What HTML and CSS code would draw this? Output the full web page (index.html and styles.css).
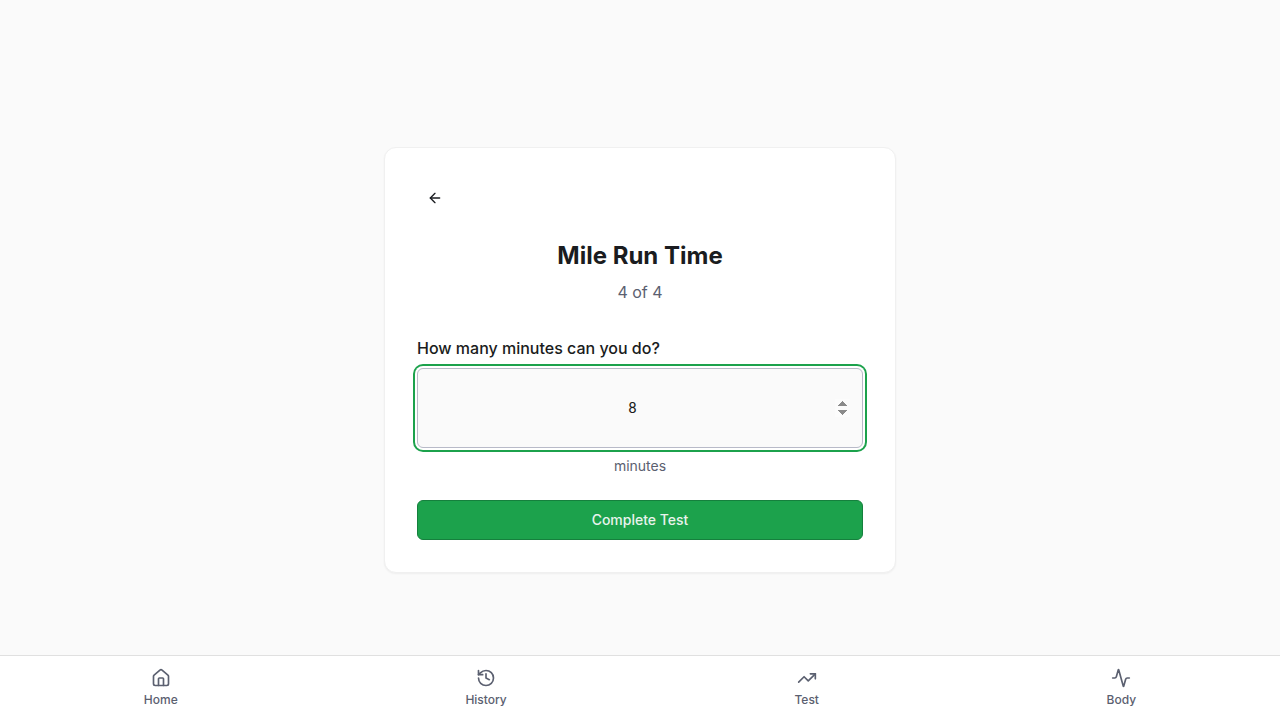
FILE: index.html
```html
<!DOCTYPE html>
<html lang="en">
<head>
<meta charset="utf-8">
<meta name="viewport" content="width=device-width, initial-scale=1">
<title>Mile Run Time</title>
<link rel="stylesheet" href="styles.css">
</head>
<body>
<main class="page">
  <form class="card">
    <button type="button" class="back" aria-label="Back">
      <svg class="icon-sm" viewBox="0 0 24 24"><path d="m12 19-7-7 7-7"/><path d="M19 12H5"/></svg>
    </button>
    <header class="heading">
      <h1 class="title">Mile Run Time</h1>
      <p class="step">4 of 4</p>
    </header>
    <div class="field">
      <label class="label" for="minutes">How many minutes can you do?</label>
      <input class="input" id="minutes" type="number" value="8" autofocus>
      <p class="unit">minutes</p>
    </div>
    <button type="button" class="submit">Complete Test</button>
  </form>
</main>
<nav class="tabs">
  <a class="tab" href="#home">
    <svg class="icon" viewBox="0 0 24 24"><path d="M15 21v-8a1 1 0 0 0-1-1h-4a1 1 0 0 0-1 1v8"/><path d="M3 10a2 2 0 0 1 .709-1.528l7-5.999a2 2 0 0 1 2.582 0l7 5.999A2 2 0 0 1 21 10v9a2 2 0 0 1-2 2H5a2 2 0 0 1-2-2z"/></svg>
    <span>Home</span>
  </a>
  <a class="tab" href="#history">
    <svg class="icon" viewBox="0 0 24 24"><path d="M3 12a9 9 0 1 0 9-9 9.75 9.75 0 0 0-6.74 2.74L3 8"/><path d="M3 3v5h5"/><path d="M12 7v5l4 2"/></svg>
    <span>History</span>
  </a>
  <a class="tab" href="#test">
    <svg class="icon" viewBox="0 0 24 24"><path d="M22 7 13.5 15.500 8.500 10.500 2 17"/><path d="M16 7h6v6"/></svg>
    <span>Test</span>
  </a>
  <a class="tab" href="#body">
    <svg class="icon" viewBox="0 0 24 24"><path d="M22 12h-2.480a2 2 0 0 0-1.930 1.460l-2.350 8.360a.25.25 0 0 1-.48 0L9.240 2.180a.25.25 0 0 0-.48 0l-2.350 8.360A2 2 0 0 1 4.490 12H2"/></svg>
    <span>Body</span>
  </a>
</nav>
</body>
</html>
```
FILE: styles.css
```css
*, *::before, *::after { box-sizing: border-box; }
body {
  margin: 0;
  min-height: 100vh;
  display: flex;
  flex-direction: column;
  background: #fafafa;
  color: #1a1c20;
  font-family: Inter, "Liberation Sans", sans-serif;
  font-size: 16px;
  line-height: 24px;
}
h1, p { margin: 0; }
svg {
  fill: none;
  stroke: currentColor;
  stroke-width: 2;
  stroke-linecap: round;
  stroke-linejoin: round;
}
.icon { width: 20px; height: 20px; }
.icon-sm { width: 16px; height: 16px; }
.page {
  flex: 1;
  display: flex;
  align-items: center;
  justify-content: center;
  padding: 80px 16px 16px;
}
.card {
  width: 100%;
  max-width: 512px;
  padding: 32px;
  display: flex;
  flex-direction: column;
  background: #fff;
  border: 1px solid #f0f0f0;
  border-radius: 12px;
  box-shadow: 0 1px 2px rgba(0, 0, 0, 0.05);
}
.back {
  align-self: flex-start;
  display: flex;
  align-items: center;
  justify-content: center;
  width: 36px;
  height: 36px;
  margin-bottom: 24px;
  padding: 0;
  background: none;
  border: 0;
  border-radius: 6px;
  color: inherit;
}
.heading {
  display: flex;
  flex-direction: column;
  gap: 8px;
  margin-bottom: 32px;
  text-align: center;
}
.title { font-size: 24px; line-height: 32px; font-weight: 700; }
.step { color: #5b6070; }
.field {
  display: flex;
  flex-direction: column;
  gap: 8px;
  margin-bottom: 24px;
}
.label { font-weight: 500; }
.input {
  width: 100%;
  height: 80px;
  padding: 8px 12px;
  background: #fafafa;
  border: 1px solid #b8bac8;
  border-radius: 6px;
  outline: none;
  box-shadow: 0 0 0 2px #fff, 0 0 0 4px #1ca24c;
  color: inherit;
  font-family: Roboto, sans-serif;
  font-size: 15px;
  line-height: 20px;
  text-align: center;
}
.input::-webkit-inner-spin-button { opacity: 1; }
.unit { color: #5b6070; font-size: 14px; line-height: 20px; text-align: center; }
.submit {
  height: 40px;
  padding: 8px 16px;
  background: #1ca24c;
  border: 1px solid #15803d;
  border-radius: 6px;
  color: #e8f3ec;
  font-family: inherit;
  font-size: 14px;
  line-height: 20px;
  font-weight: 500;
}
.tabs {
  display: flex;
  justify-content: space-around;
  padding: 8px 0;
  background: #fff;
  border-top: 1px solid #e0e0e0;
}
.tab {
  display: flex;
  flex-direction: column;
  align-items: center;
  gap: 4px;
  padding: 4px 12px;
  color: #5b6070;
  font-size: 12px;
  line-height: 16px;
  font-weight: 500;
  text-decoration: none;
}
```
